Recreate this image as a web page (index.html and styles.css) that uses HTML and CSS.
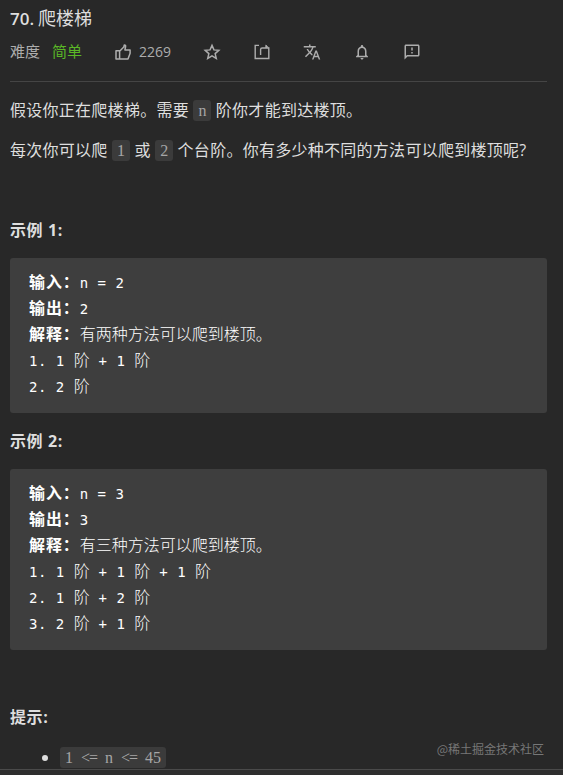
FILE: index.html
```
<!DOCTYPE html>
<html lang="zh-CN">
<head>
  <meta charset="utf-8">
  <title>70. 爬楼梯</title>
  <link rel="stylesheet" href="styles.css">
</head>
<body>
  <div class="page">
    <div class="header">
      <h1 class="title"><span class="title-num">70.</span>爬楼梯</h1>
      <div class="toolbar">
        <span class="label">难度</span>
        <span class="level">简单</span>
        <span class="like">
          <svg class="icon" viewBox="0 0 18 18"><path d="M2 7.8h3.6v8.2H2zM5.6 8.2L9.8 4l.5-2.1c.8-.1 1.5.7 1.3 1.6L10.9 7h5.2v3.2L14 16H5.6" fill="none" stroke="currentColor" stroke-width="1.5" stroke-linejoin="round"/></svg>
          <span class="count">2269</span>
        </span>
        <span class="actions">
          <svg class="icon" viewBox="0 0 24 24"><path d="M12 3.2l2.6 6 6.5.6-4.9 4.3 1.5 6.4-5.7-3.4-5.7 3.4 1.5-6.4-4.9-4.3 6.5-.6z" fill="none" stroke="currentColor" stroke-width="2"/></svg>
          <svg class="icon" viewBox="0 0 18 18"><path d="M6 2.4H2.2v13.1h13.6V5H9.2q-1.6 0-1.6 1.6V12M13.2 2.2v3" fill="none" stroke="currentColor" stroke-width="1.4"/><path d="M12.6 1.5l3.6 3.3h-3.6z" fill="currentColor"/></svg>
          <svg class="icon" viewBox="0 0 24 24"><path fill="currentColor" d="M12.87 15.07l-2.54-2.51.03-.03A17.52 17.52 0 0014.07 6H17V4h-7V2H8v2H1v2h11.17C11.5 7.92 10.44 9.75 9 11.35 8.07 10.32 7.3 9.19 6.69 8h-2c.73 1.63 1.73 3.17 2.98 4.56l-5.09 5.02L4 19l5-5 3.11 3.11.76-2.04zM18.5 10h-2L12 22h2l1.12-3h4.75L21 22h2l-4.5-12zm-2.62 7l1.62-4.33L19.12 17h-3.24z"/></svg>
          <svg class="icon" viewBox="0 0 24 24"><path fill="currentColor" d="M12 22c1.1 0 2-.9 2-2h-4c0 1.1.9 2 2 2zm6-6v-5c0-3.07-1.63-5.64-4.5-6.32V4c0-.83-.67-1.5-1.5-1.5s-1.5.67-1.5 1.5v.68C7.64 5.36 6 7.92 6 11v5l-2 2v1h16v-1l-2-2zm-2 1H8v-6c0-2.48 1.51-4.5 4-4.5s4 2.02 4 4.5v6z"/></svg>
          <svg class="icon" viewBox="0 0 24 24"><path fill="currentColor" d="M20 2H4c-1.1 0-1.99.9-1.99 2L2 22l4-4h14c1.1 0 2-.9 2-2V4c0-1.1-.9-2-2-2zm0 14H5.17L4 17.17V4h16v12zm-9-4h2v2h-2zm0-6h2v4h-2z"/></svg>
        </span>
      </div>
    </div>

    <div class="content">
      <p>假设你正在爬楼梯。需要 <code>n</code> 阶你才能到达楼顶。</p>
      <p>每次你可以爬 <code>1</code> 或 <code>2</code> 个台阶。你有多少种不同的方法可以爬到楼顶呢?</p>
      <p class="blank">&nbsp;</p>
      <p class="example"><strong>示例 1:</strong></p>
<pre><b>输入：</b><i>n = 2</i>
<b>输出：</b><i>2</i>
<b>解释：</b>有两种方法可以爬到楼顶。
<i>1. 1 </i>阶<i> + 1 </i>阶
<i>2. 2 </i>阶</pre>
      <p class="example"><strong>示例 2:</strong></p>
<pre><b>输入：</b><i>n = 3</i>
<b>输出：</b><i>3</i>
<b>解释：</b>有三种方法可以爬到楼顶。
<i>1. 1 </i>阶<i> + 1 </i>阶<i> + 1 </i>阶
<i>2. 1 </i>阶<i> + 2 </i>阶
<i>3. 2 </i>阶<i> + 1 </i>阶</pre>
      <p class="blank">&nbsp;</p>
      <p><strong>提示:</strong></p>
      <ul>
        <li><code>1 <span class="op">&lt;=</span> n <span class="op">&lt;=</span> 45</code></li>
      </ul>
    </div>
    <div class="footer"></div>
    <div class="watermark">@稀土掘金技术社区</div>
  </div>
</body>
</html>
```
FILE: styles.css
```
* {
  box-sizing: border-box;
}
body {
  margin: 0;
  background-color: #282828;
  color: #dedede;
  font-family: "Open Sans", "Noto Sans CJK SC", sans-serif;
}
.page {
  position: relative;
  display: flex;
  flex-direction: column;
  height: 775px;
  overflow: hidden;
}
.header {
  height: 82px;
  margin: 0 16px 0 10px;
  border-bottom: 1px solid #454545;
}
.title {
  display: flex;
  align-items: baseline;
  height: 38px;
  margin: 0;
  font-size: 18px;
  font-weight: 400;
  line-height: 36px;
}
.title-num {
  width: 28px;
  font-size: 17px;
  font-weight: 600;
}
.toolbar {
  display: flex;
  align-items: center;
  height: 28px;
  font-size: 15px;
  line-height: 28px;
  color: #adadad;
}
.label,
.level {
  line-height: 26px;
  padding-bottom: 2px;
}
.level {
  margin-left: 12px;
  color: #5ab726;
}
.like {
  display: flex;
  align-items: center;
  margin-left: 32px;
}
.count {
  margin-left: 7px;
  font-size: 14px;
}
.actions {
  display: flex;
  gap: 32px;
  margin-left: 32px;
}
.icon {
  display: block;
  width: 18px;
  height: 18px;
}
.content {
  flex: 1;
  min-height: 0;
  padding: 15px 16px 0 10px;
  font-size: 16px;
  line-height: 26px;
}
p {
  margin: 0 0 14px;
  letter-spacing: 0.27px;
  white-space: nowrap;
}
.example {
  margin-bottom: 15px;
}
strong {
  font-weight: 700;
  letter-spacing: 0.6px;
}
code {
  display: inline-block;
  height: 21px;
  padding: 0 5px;
  border-radius: 3px;
  background-color: #3b3b3b;
  color: #a6a6a6;
  font-family: "Liberation Serif", serif;
  font-size: 16px;
  line-height: 22px;
  letter-spacing: 0;
  word-spacing: 4px;
}
.op {
  letter-spacing: -1px;
}
pre {
  margin: 0 0 15px;
  padding: 10px 19px 15px;
  border-radius: 3px;
  background-color: #3e3e3e;
  color: #fff;
  font-family: "Noto Sans CJK SC", sans-serif;
  font-size: 16px;
  font-weight: 300;
  line-height: 26px;
}
pre + .blank {
  margin-top: -1px;
}
pre b {
  font-weight: 700;
  line-height: 1;
  letter-spacing: 0.9px;
}
pre i {
  font-family: "DejaVu Sans Mono", monospace;
  font-size: 14px;
  font-style: normal;
  font-weight: 400;
  line-height: 1;
  letter-spacing: 0.5px;
}
ul {
  margin: 0;
  padding-left: 50px;
}
.footer {
  height: 6px;
  border-top: 1px solid #4a4a4a;
  background-color: #2e2e2e;
}
.watermark {
  position: absolute;
  right: 19px;
  bottom: 16px;
  color: #777;
  font-family: "Noto Sans CJK SC", sans-serif;
  font-size: 12px;
  line-height: 20px;
}
```
